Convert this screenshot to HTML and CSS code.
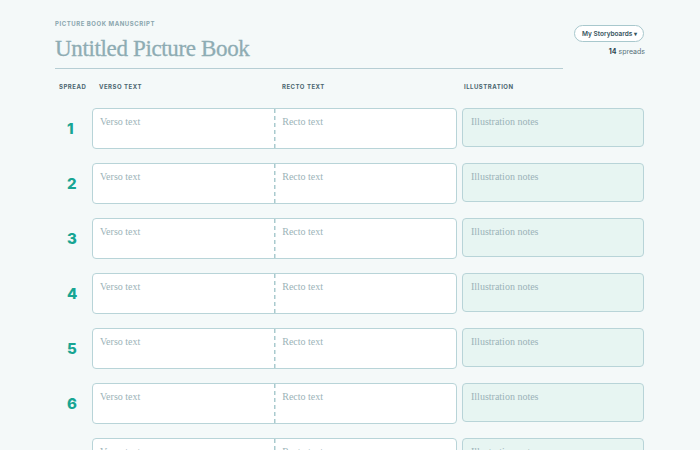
FILE: index.html
```html
<!DOCTYPE html>
<html>
<head>
<meta charset="utf-8">
<link rel="stylesheet" href="styles.css">
</head>
<body>
<div class="page">
  <header class="top">
    <div class="top-left">
      <div class="eyebrow">PICTURE BOOK MANUSCRIPT</div>
      <h1 class="title">Untitled Picture Book</h1>
    </div>
    <div class="top-right">
      <button class="btn">My Storyboards <span class="caret">▾</span></button>
      <div class="count"><b>14</b> spreads</div>
    </div>
  </header>

  <div class="cols">
    <div class="col-spread">SPREAD</div>
    <div class="col-verso">VERSO TEXT</div>
    <div class="col-recto">RECTO TEXT</div>
    <div class="col-illus">ILLUSTRATION</div>
  </div>

  <div class="rows">
    <div class="row"><div class="num">1</div><div class="text"><div class="half">Verso text</div><div class="half recto">Recto text</div></div><div class="illus">Illustration notes</div></div>
    <div class="row"><div class="num">2</div><div class="text"><div class="half">Verso text</div><div class="half recto">Recto text</div></div><div class="illus">Illustration notes</div></div>
    <div class="row"><div class="num">3</div><div class="text"><div class="half">Verso text</div><div class="half recto">Recto text</div></div><div class="illus">Illustration notes</div></div>
    <div class="row"><div class="num">4</div><div class="text"><div class="half">Verso text</div><div class="half recto">Recto text</div></div><div class="illus">Illustration notes</div></div>
    <div class="row"><div class="num">5</div><div class="text"><div class="half">Verso text</div><div class="half recto">Recto text</div></div><div class="illus">Illustration notes</div></div>
    <div class="row"><div class="num">6</div><div class="text"><div class="half">Verso text</div><div class="half recto">Recto text</div></div><div class="illus">Illustration notes</div></div>
    <div class="row"><div class="num">7</div><div class="text"><div class="half">Verso text</div><div class="half recto">Recto text</div></div><div class="illus">Illustration notes</div></div>
  </div>
</div>
</body>
</html>
```
FILE: styles.css
```css
html, body {
  margin: 0;
  padding: 0;
  background: #f4f9f9;
  overflow: hidden;
  height: 450px;
}
.page {
  width: 590px;
  margin-left: 55px;
  padding-top: 20px;
  font-family: "Inter", "Lato", sans-serif;
}
.top {
  display: flex;
  justify-content: space-between;
  align-items: flex-start;
}
.top-left {
  width: 508px;
  border-bottom: 1.5px solid #b6ced4;
  padding-bottom: 4px;
}
.eyebrow {
  font-size: 6px;
  font-weight: 700;
  letter-spacing: 0.55px;
  color: #8aa6ae;
  line-height: 8px;
}
.title {
  margin: 6px 0 0 0;
  font-family: "Liberation Serif", "DejaVu Serif", serif;
  font-weight: 400;
  font-size: 23px;
  letter-spacing: -0.35px;
  line-height: 30px;
  color: #8eacb3;
  -webkit-text-stroke: 0.3px #8eacb3;
}
.top-right {
  display: flex;
  flex-direction: column;
  align-items: flex-end;
  padding-top: 5px;
}
.btn {
  height: 17px;
  padding: 0 6px 0 7px;
  border: 1.5px solid #a8c8cd;
  border-radius: 10px;
  background: #ffffff;
  font-family: "Inter", sans-serif;
  font-size: 6.5px;
  font-weight: 600;
  color: #36535d;
  margin-right: 1px;
}
.caret {
  font-size: 5.5px;
}
.count {
  margin-top: 5px;
  font-size: 7px;
  color: #56717a;
}
.count b {
  color: #2c4650;
  font-weight: 700;
}
.cols {
  display: flex;
  margin-top: 14px;
  font-size: 6px;
  font-weight: 700;
  letter-spacing: 0.5px;
  color: #4b6670;
  line-height: 8px;
}
.col-spread { width: 40px; padding-left: 4px; }
.col-verso { width: 183px; }
.col-recto { width: 182px; }
.col-illus { padding-left: 0; }
.rows {
  display: flex;
  flex-direction: column;
  gap: 14px;
  margin-top: 17px;
}
.row {
  display: flex;
  align-items: flex-start;
}
.num {
  width: 37px;
  height: 41px;
  box-sizing: border-box;
  padding-left: 12px;
  display: flex;
  align-items: center;
  font-size: 15px;
  font-weight: 800;
  color: #17a593;
}
.text {
  width: 365px;
  height: 41px;
  box-sizing: border-box;
  display: flex;
  background: #ffffff;
  border: 1.5px solid #b8d4d8;
  border-radius: 4px;
}
.half {
  flex: 1;
  padding: 7px 7px;
  font-family: "Liberation Serif", "DejaVu Serif", serif;
  font-size: 10px;
  color: #9bb3b8;
}
.half.recto {
  padding-left: 8.5px;
  background-image: repeating-linear-gradient(to bottom, #a9cace 0, #a9cace 4px, transparent 4px, transparent 7px);
  background-size: 1.5px 100%;
  background-repeat: no-repeat;
  background-position: left top;
}
.illus {
  width: 182px;
  height: 39px;
  margin-left: 5px;
  box-sizing: border-box;
  padding: 7px 8px;
  background: #e7f5f2;
  border: 1.5px solid #b8d4d8;
  border-radius: 4px;
  font-family: "Liberation Serif", "DejaVu Serif", serif;
  font-size: 10px;
  color: #9bb3b8;
}
```
